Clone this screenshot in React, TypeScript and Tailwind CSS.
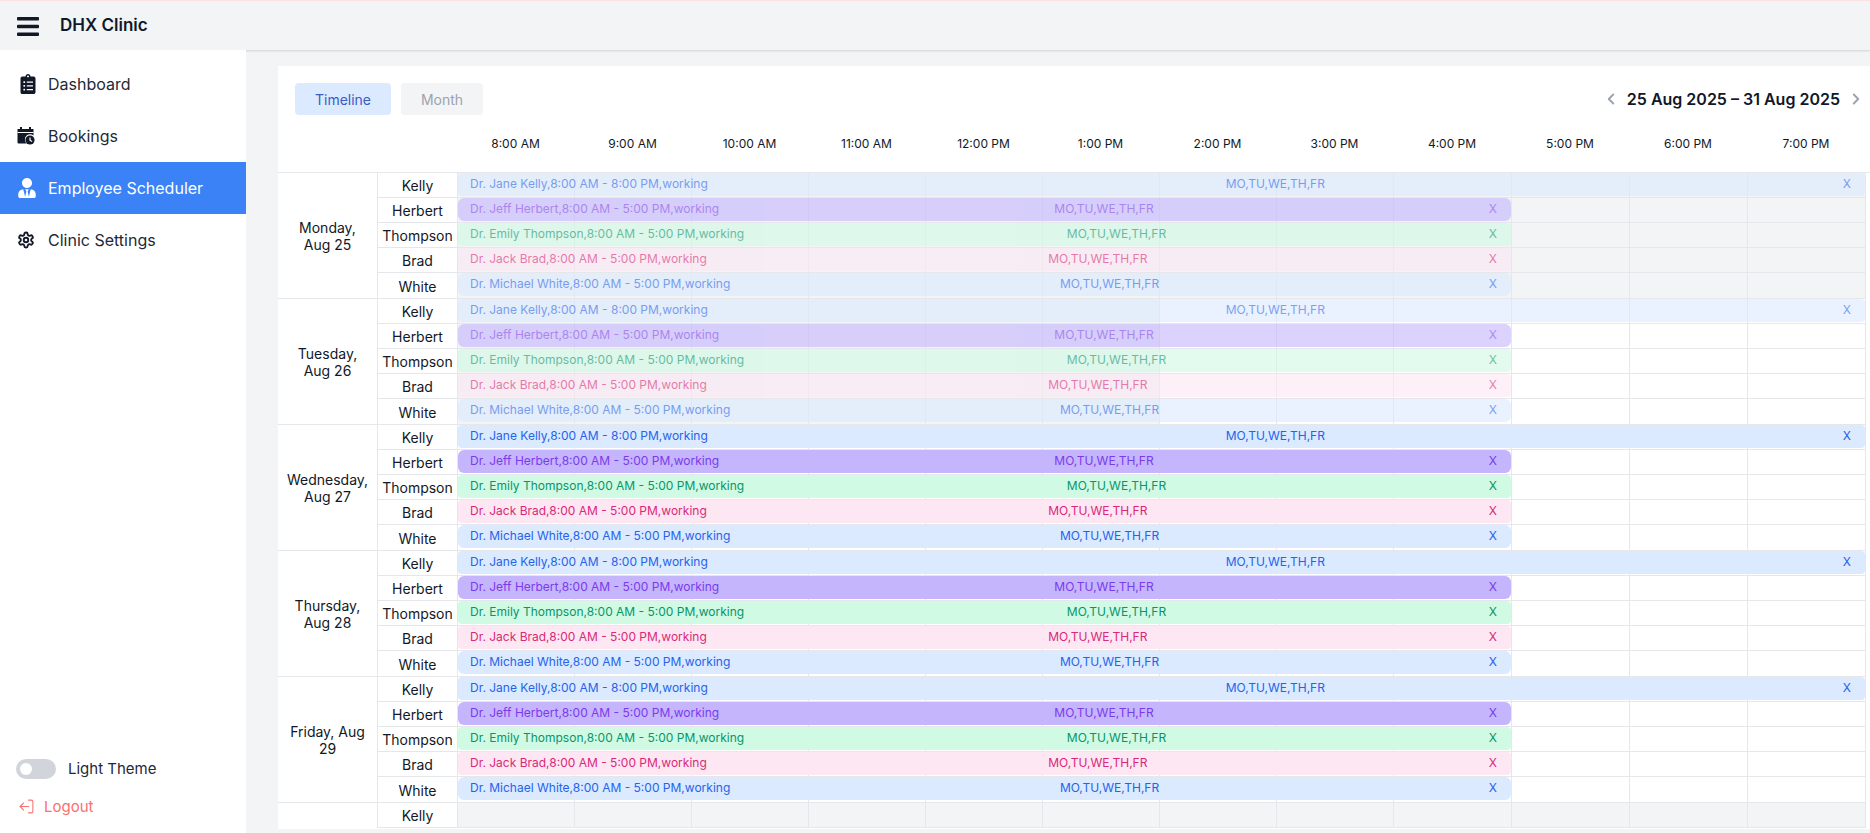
import { ChevronLeft, ChevronRight, LogOut } from 'lucide-react'
import { FaClipboardList, FaUserTie } from 'react-icons/fa'
import { LuSettings } from 'react-icons/lu'

const HOURS = ['8:00 AM', '9:00 AM', '10:00 AM', '11:00 AM', '12:00 PM', '1:00 PM', '2:00 PM', '3:00 PM', '4:00 PM', '5:00 PM', '6:00 PM', '7:00 PM']

const DOCTORS = [
  { name: 'Kelly', label: 'Dr. Jane Kelly,8:00 AM - 8:00 PM,working', bar: 'w-[1407px] rounded-[4px] bg-[#dbeafe] text-[#2563eb]' },
  { name: 'Herbert', label: 'Dr. Jeff Herbert,8:00 AM - 5:00 PM,working', bar: 'w-[1053px] rounded-[6px] bg-[#c4b5fd] text-[#7c3aed]' },
  { name: 'Thompson', label: 'Dr. Emily Thompson,8:00 AM - 5:00 PM,working', bar: 'w-[1053px] rounded-[4px] bg-[#d1fae5] text-[#059669]' },
  { name: 'Brad', label: 'Dr. Jack Brad,8:00 AM - 5:00 PM,working', bar: 'w-[1053px] rounded-[4px] bg-[#fce7f3] text-[#db2777]' },
  { name: 'White', label: 'Dr. Michael White,8:00 AM - 5:00 PM,working', bar: 'w-[1053px] rounded-[6px] bg-[#dbeafe] text-[#2563eb]' },
]

// grayUntil = how many hour cells are already in the past
const DAYS = [
  { label: 'Monday, Aug 25', grayUntil: 12, dim: true, partial: false },
  { label: 'Tuesday, Aug 26', grayUntil: 6, dim: true, partial: false },
  { label: 'Wednesday, Aug 27', grayUntil: 0, dim: false, partial: false },
  { label: 'Thursday, Aug 28', grayUntil: 0, dim: false, partial: false },
  { label: 'Friday, Aug 29', grayUntil: 0, dim: false, partial: false },
  { label: '', grayUntil: 12, dim: false, partial: true },
]

function BookingsIcon() {
  return (
    <svg viewBox="0 0 18 18" className="h-[18px] w-[18px] text-[#111827]" fill="currentColor">
      <rect x="3" y="0" width="2" height="3" />
      <rect x="12" y="0" width="2" height="3" />
      <path d="M0.5 2h16v6.5a5 5 0 0 0-6.8 8H1.5a1 1 0 0 1-1-1z" />
      <circle cx="13" cy="13" r="4.6" />
      <path d="M12.4 10.5h1.2v2.4l1.8 1.1-.6 1-2.4-1.5z" fill="#fff" />
      <rect x="0.5" y="5" width="16" height="1" fill="#fff" />
    </svg>
  )
}

function NavItem({ icon, label, active }: { icon: React.ReactNode; label: string; active?: boolean }) {
  return (
    <div className={`flex h-[52px] items-center pl-[17px] text-[16px] ${active ? 'bg-[#3b82f6] text-white' : 'text-[#1f2937]'}`}>
      <span className="flex w-[31px] shrink-0 items-center">{icon}</span>
      {label}
    </div>
  )
}

function DayRow({ doctor, day, last }: { doctor: (typeof DOCTORS)[number]; day: (typeof DAYS)[number]; last: boolean }) {
  return (
    <div className={`flex ${last ? 'h-[26px]' : 'h-[25px]'}`}>
      <div className="flex w-[80px] shrink-0 items-center justify-center border-r border-b border-[#e5e7eb] pt-[1px] text-[14px] text-[#111827]">
        {doctor.name}
      </div>
      <div className="relative w-[1408px] shrink-0">
        <div className="grid h-full grid-cols-[repeat(8,117px)_repeat(4,118px)]">
          {HOURS.map((h, i) => (
            <div key={h} className={`border-r border-b border-[#e5e7eb] ${i < day.grayUntil ? 'bg-[#f3f4f6]' : 'bg-white'}`} />
          ))}
        </div>
        {!day.partial && (
          <div className={`absolute top-0 left-0 flex h-[23px] items-center justify-between pr-[14px] pb-[2px] pl-3 text-[12px] ${doctor.bar} ${day.dim ? 'opacity-60' : ''}`}>
            <span>{doctor.label}</span>
            <span>MO,TU,WE,TH,FR</span>
            <span>X</span>
          </div>
        )}
      </div>
    </div>
  )
}

function DaySection({ day }: { day: (typeof DAYS)[number] }) {
  const rows = day.partial ? DOCTORS.slice(0, 1) : DOCTORS
  return (
    <div className="flex">
      <div className={`flex w-[100px] shrink-0 items-center justify-center border-r border-[#e5e7eb] px-[10px] text-center text-[14px] leading-[17px] text-[#111827] ${day.partial ? '' : 'border-b'}`}>
        {day.label}
      </div>
      <div className="flex flex-col">
        {rows.map((d, i) => (
          <DayRow key={d.name} doctor={d} day={day} last={i === 4} />
        ))}
      </div>
    </div>
  )
}

export default function App() {
  return (
    <div className="flex h-screen flex-col overflow-hidden bg-[#f3f4f6] font-[Inter,sans-serif]">
      <header className="flex h-[50px] shrink-0 items-center border-t border-[#fde2e4] bg-[#f3f4f6] pt-[1px] pl-[17px] shadow-[0_1px_2px_rgba(0,0,0,0.15)]">
        <svg viewBox="0 0 22 19" className="h-[19px] w-[22px] text-[#111827]" fill="currentColor">
          <rect x="0" y="0" width="22" height="3.6" rx="1" />
          <rect x="0" y="7.7" width="22" height="3.6" rx="1" />
          <rect x="0" y="15.4" width="22" height="3.6" rx="1" />
        </svg>
        <span className="ml-[21px] text-[17px] font-semibold text-[#111827]">DHX Clinic</span>
      </header>

      <div className="flex min-h-0 flex-1">
        <aside className="flex w-[246px] shrink-0 flex-col bg-white pt-2">
          <NavItem icon={<FaClipboardList size={20} className="ml-[1px] text-[#111827]" />} label="Dashboard" />
          <NavItem icon={<BookingsIcon />} label="Bookings" />
          <NavItem icon={<FaUserTie size={20} />} label="Employee Scheduler" active />
          <NavItem icon={<LuSettings size={18} strokeWidth={2.5} className="text-[#111827]" />} label="Clinic Settings" />

          <div className="mt-auto pb-[15px] pl-[16px]">
            <div className="flex items-center gap-3">
              <div className="flex h-[20px] w-[40px] items-center rounded-full bg-[#d1d5db] pl-1">
                <div className="h-3 w-3 rounded-full bg-white" />
              </div>
              <span className="text-[15px] text-[#1f2937]">Light Theme</span>
            </div>
            <div className="mt-[15px] flex items-center gap-[9px] pl-[2px] text-[15px] text-[#f87171]">
              <LogOut size={17} strokeWidth={1.5} className="-scale-x-100" />
              Logout
            </div>
          </div>
        </aside>

        <main className="min-w-0 flex-1 pt-[16px] pb-[4px] pl-[32px]">
          <div className="h-full overflow-hidden bg-white">
            <div className="flex items-center justify-between pt-[17px] pr-[5px] pl-[17px]">
              <div className="flex gap-[10px]">
                <button className="h-8 w-[96px] rounded-[4px] bg-[#dbeafe] text-[14px] text-[#3b5cc4]">Timeline</button>
                <button className="h-8 w-[82px] rounded-[4px] bg-[#f3f4f6] text-[14px] text-[#9ca3af]">Month</button>
              </div>
              <div className="flex items-center gap-[7px] text-[16px] font-semibold text-[#111827]">
                <ChevronLeft size={18} strokeWidth={2.5} className="text-[#9ca3af]" />
                25 Aug 2025 – 31 Aug 2025
                <ChevronRight size={18} strokeWidth={2.5} className="text-[#9ca3af]" />
              </div>
            </div>

            <div className="mt-[15px] flex h-[43px] items-start border-b border-[#e5e7eb]">
              <div className="w-[180px] shrink-0" />
              <div className="grid w-[1408px] shrink-0 grid-cols-[repeat(8,117px)_repeat(4,118px)] text-center text-[12px] leading-[28px] text-[#111827]">
                {HOURS.map((h) => (
                  <div key={h} className="pr-[2px]">{h}</div>
                ))}
              </div>
            </div>

            {DAYS.map((d, i) => (
              <DaySection key={i} day={d} />
            ))}
          </div>
        </main>
      </div>
    </div>
  )
}
